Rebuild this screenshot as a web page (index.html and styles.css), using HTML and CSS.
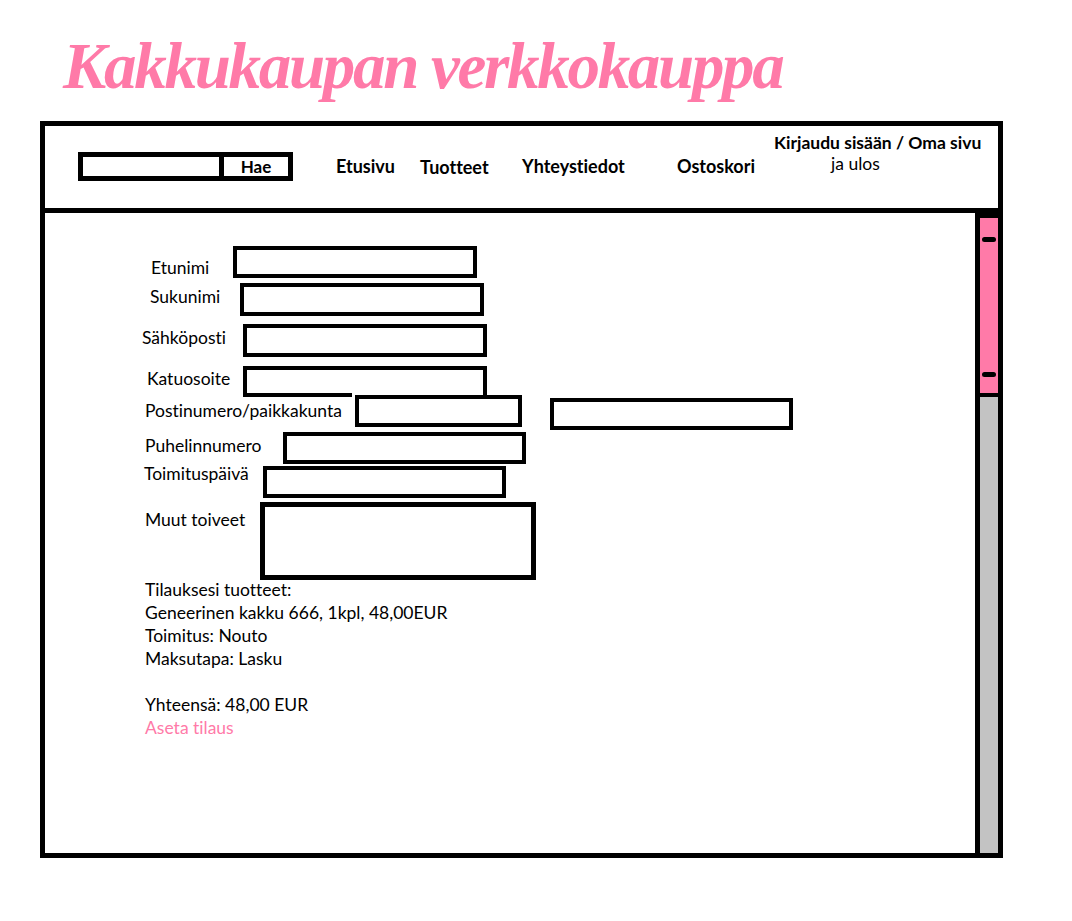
FILE: index.html
```html
<!DOCTYPE html>
<html>

<head>
    <meta charset="utf-8">
    <title>Kakkukaupan verkkokauppa</title>
    <link rel="stylesheet" href="styles.css">
</head>

<body>
    <h1 class="title">Kakkukaupan verkkokauppa</h1>
    <div class="frame">
        <div class="header">
            <div class="search">
                <div class="search-input"></div>
                <div class="search-button">Hae</div>
            </div>
            <div class="nav">
                <div class="nav-item nav-etusivu">Etusivu</div>
                <div class="nav-item nav-tuotteet">Tuotteet</div>
                <div class="nav-item nav-yhteys">Yhteystiedot</div>
                <div class="nav-item nav-ostoskori">Ostoskori</div>
                <div class="login">
                    <div class="login-top">Kirjaudu sisään / Oma sivu</div>
                    <div class="login-bottom">ja ulos</div>
                </div>
            </div>
        </div>
        <div class="main">
            <div class="content">
                <div class="form">
                    <div class="field f-etunimi">
                        <div class="label">Etunimi</div>
                        <div class="box"></div>
                    </div>
                    <div class="field f-sukunimi">
                        <div class="label">Sukunimi</div>
                        <div class="box"></div>
                    </div>
                    <div class="field f-email">
                        <div class="label">Sähköposti</div>
                        <div class="box"></div>
                    </div>
                    <div class="field f-katu">
                        <div class="label">Katuosoite</div>
                        <div class="box"></div>
                    </div>
                    <div class="field f-posti">
                        <div class="label">Postinumero/paikkakunta</div>
                        <div class="box"></div>
                        <div class="box box-city"></div>
                    </div>
                    <div class="field f-puhelin">
                        <div class="label">Puhelinnumero</div>
                        <div class="box"></div>
                    </div>
                    <div class="field f-paiva">
                        <div class="label">Toimituspäivä</div>
                        <div class="box"></div>
                    </div>
                    <div class="field f-toiveet">
                        <div class="label">Muut toiveet</div>
                        <div class="box"></div>
                    </div>
                </div>
                <div class="summary">
                    <p>Tilauksesi tuotteet:</p>
                    <p>Geneerinen kakku 666, 1kpl, 48,00EUR</p>
                    <p>Toimitus: Nouto</p>
                    <p>Maksutapa: Lasku</p>
                    <p class="total">Yhteensä: 48,00 EUR</p>
                    <p class="order">Aseta tilaus</p>
                </div>
            </div>
            <div class="scrollbar">
                <div class="thumb">
                    <span class="grip"></span>
                    <span class="grip"></span>
                </div>
            </div>
        </div>
    </div>
</body>

</html>
```

FILE: styles.css
```css
* {
    box-sizing: border-box;
    margin: 0;
    padding: 0;
}

body {
    background-color: #fff;
    color: #000;
    font-family: Lato, "Open Sans", sans-serif;
    font-size: 17.5px;
    font-variant-ligatures: none;
}

.title {
    color: #ff7aa8;
    font-family: "Liberation Serif", serif;
    font-size: 65px;
    font-style: italic;
    font-weight: bold;
    height: 121px;
    letter-spacing: -2.3px;
    line-height: 68px;
    padding: 32px 0 0 63px;
}

.frame {
    border: 5px solid #000;
    height: 737px;
    margin-left: 40px;
    width: 963px;
    display: flex;
    flex-direction: column;
}

/* header */
.header {
    border-bottom: 5px solid #000;
    display: flex;
    height: 87px;
}

.search {
    border: 5px solid #000;
    display: flex;
    height: 29px;
    margin: 26px 0 0 33px;
    width: 215px;
}

.search-input {
    border-right: 5px solid #000;
    width: 141px;
}

.search-button {
    flex: 1;
    font-size: 17px;
    font-weight: bold;
    line-height: 19px;
    text-align: center;
}

.nav {
    display: flex;
    margin-left: 43px;
}

.nav-item {
    font-size: 18px;
    font-weight: bold;
    line-height: 20px;
    margin-top: 30px;
}

.nav-etusivu {
    width: 84px;
}

.nav-tuotteet {
    margin-top: 31px;
    width: 102px;
}

.nav-yhteys {
    width: 155px;
}

.nav-ostoskori {
    width: 97px;
}

.login {
    font-size: 17.5px;
    line-height: 21px;
    margin-top: 6px;
}

.login-top {
    font-weight: bold;
}

.login-bottom {
    padding-left: 57px;
}

/* main area */
.main {
    display: flex;
    flex: 1;
}

.content {
    flex: 1;
    padding: 33px 0 0 100px;
}

.field {
    align-items: flex-start;
    display: flex;
}

.label {
    line-height: 20px;
}

.box {
    border: 4px solid #000;
    height: 32px;
    width: 244px;
}

.f-etunimi .label {
    margin: 12px 0 0 6px;
    width: 82px;
}

.f-sukunimi {
    margin-top: 5px;
}

.f-sukunimi .label {
    margin: 4px 0 0 5px;
    width: 90px;
}

.f-sukunimi .box {
    height: 33px;
}

.f-email {
    margin-top: 8px;
}

.f-email .label {
    margin: 4px 0 0 -3px;
    width: 101px;
}

.f-email .box {
    height: 33px;
}

.f-katu {
    margin-top: 9px;
}

.f-katu .label {
    margin: 3px 0 0 2px;
    width: 96px;
}

.f-katu .box {
    background: linear-gradient(#000, #000) left bottom / 105px 4px no-repeat;
    border-bottom: none;
    height: 31px;
}

.f-posti {
    margin-top: -2px;
}

.f-posti .label {
    margin-top: 6px;
    width: 210px;
}

.f-posti .box {
    width: 167px;
}

.f-posti .box-city {
    margin: 3px 0 -3px 28px;
    width: 243px;
}

.f-puhelin {
    margin-top: 5px;
}

.f-puhelin .label {
    margin-top: 4px;
    width: 138px;
}

.f-puhelin .box {
    width: 243px;
}

.f-paiva {
    margin-top: 2px;
}

.f-paiva .label {
    margin: -2px 0 0 -1px;
    width: 119px;
}

.f-paiva .box {
    width: 243px;
}

.f-toiveet {
    margin-top: 4px;
}

.f-toiveet .label {
    margin-top: 8px;
    width: 115px;
}

.f-toiveet .box {
    border-width: 5px;
    height: 78px;
    width: 276px;
}

.summary {
    line-height: 23px;
    margin-top: -2px;
}

.total {
    margin-top: 23px;
}

.order {
    color: #ff7aa8;
}

/* scrollbar */
.scrollbar {
    background-color: #c3c3c3;
    border-left: 5px solid #000;
    border-top: 5px solid #000;
    width: 23px;
}

.thumb {
    background-color: #ff7aa8;
    border-bottom: 4px solid #000;
    display: flex;
    flex-direction: column;
    height: 179px;
    justify-content: space-between;
    padding: 19px 2px 16px;
}

.grip {
    background-color: #000;
    border-radius: 3px;
    height: 5px;
}
```
